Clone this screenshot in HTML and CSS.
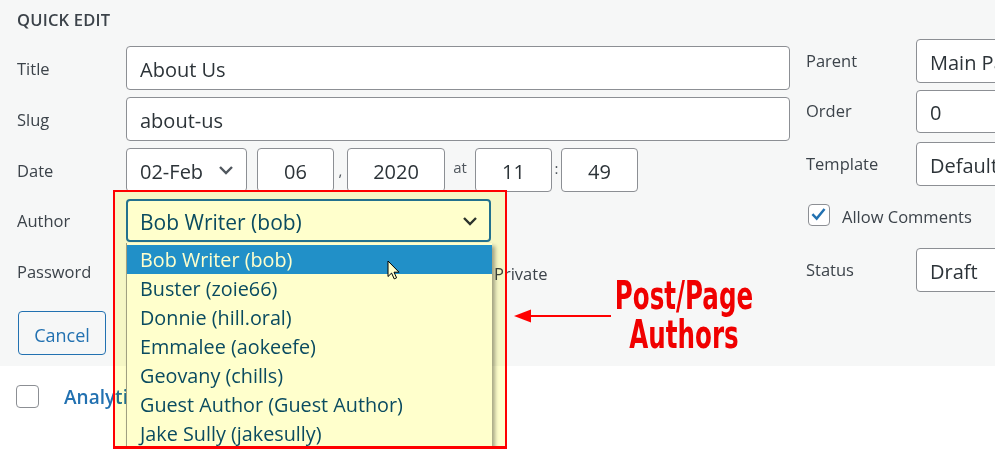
FILE: index.html
```html
<!DOCTYPE html>
<html lang="en">
<head>
<meta charset="utf-8">
<title>Quick Edit</title>
<link rel="stylesheet" href="styles.css">
</head>
<body>
<div class="page">
  <section class="panel">
    <h2 class="heading">QUICK EDIT</h2>
    <div class="cols">
      <div class="left">
        <div class="row">
          <span class="label">Title</span>
          <div class="input wide">About Us</div>
        </div>
        <div class="row">
          <span class="label">Slug</span>
          <div class="input wide">about-us</div>
        </div>
        <div class="row">
          <span class="label">Date</span>
          <div class="select month">02-Feb<svg class="chev" viewBox="0 0 20 20"><path d="M4 7l6 6 6-6" /></svg></div>
          <div class="input num day">06</div>
          <span class="sep comma">,</span>
          <div class="input num year">2020</div>
          <span class="sep at">at</span>
          <div class="input num hour">11</div>
          <span class="sep colon">:</span>
          <div class="input num min">49</div>
        </div>
        <div class="row author-row">
          <span class="label">Author</span>
          <div class="select author focus">Bob Writer (bob)<svg class="chev" viewBox="0 0 20 20"><path d="M4 7l6 6 6-6" /></svg></div>
        </div>
        <div class="row pass-row">
          <span class="label">Password</span>
          <div class="input pass"></div>
          <span class="or">&ndash;OR&ndash;</span>
          <span class="box small"></span>
          <span class="private">Private</span>
        </div>
        <div class="btn-row">
          <button class="btn">Cancel</button>
        </div>
      </div>
      <div class="right">
        <div class="rrow r-parent">
          <span class="rlabel">Parent</span>
          <div class="select rinput">Main Page (no parent)</div>
        </div>
        <div class="rrow r-order">
          <span class="rlabel">Order</span>
          <div class="input rinput order">0</div>
        </div>
        <div class="rrow r-template">
          <span class="rlabel">Template</span>
          <div class="select rinput">Default template</div>
        </div>
        <div class="rrow r-comments">
          <span class="box checked"><svg viewBox="0 0 20 20"><path d="M4.5 10.5l3.6 3.8 7.4-9" /></svg></span>
          <span class="clabel">Allow Comments</span>
        </div>
        <div class="rrow r-status">
          <span class="rlabel">Status</span>
          <div class="select rinput">Draft</div>
        </div>
      </div>
    </div>
  </section>
  <div class="list-row">
    <span class="box plain"></span>
    <span class="post-title">Analytics</span>
  </div>

  <ul class="dropdown">
    <li class="opt active">Bob Writer (bob)</li>
    <li class="opt">Buster (zoie66)</li>
    <li class="opt">Donnie (hill.oral)</li>
    <li class="opt">Emmalee (aokeefe)</li>
    <li class="opt">Geovany (chills)</li>
    <li class="opt">Guest Author (Guest Author)</li>
    <li class="opt">Jake Sully (jakesully)</li>
    <li class="opt">Jamie (jamie)</li>
  </ul>
  <svg class="cursor" viewBox="0 0 14 20"><path d="M1 1v15.5l3.6-3.4 2.6 5.8 2.4-1.1-2.6-5.6h5z" /></svg>
  <div class="highlight"></div>
  <div class="frame"></div>

  <svg class="arrow" viewBox="0 0 100 16"><path class="shaft" d="M14 8H98" /><path class="head" d="M1 8l17-6.5v13z" /></svg>
  <div class="note"><span class="note-line">Post/Page</span><span class="note-line">Authors</span></div>
</div>
</body>
</html>
```
FILE: styles.css
```css
* { box-sizing: border-box; }
html, body { margin: 0; padding: 0; }
body {
  width: 995px;
  height: 449px;
  overflow: hidden;
  background: #fff;
  font-family: "Open Sans", "Noto Sans", sans-serif;
  color: #3c434a;
}
.page { position: relative; width: 995px; height: 449px; overflow: hidden; }

.panel {
  background: #f6f7f7;
  height: 366px;
  padding: 10px 0 0 17px;
}
.heading {
  margin: 0;
  font-size: 16.5px;
  line-height: 20px;
  font-weight: 600;
  color: #3c434a;
  letter-spacing: 0.2px;
}
.cols { display: flex; }
.left { width: 773px; padding-top: 16px; }
.right { margin-left: 16px; padding-top: 9px; flex: 1; }

.row { display: flex; align-items: center; height: 44px; margin-bottom: 7px; }
.label { width: 109px; font-size: 16.5px; color: #3c434a; }

.input, .select {
  height: 44px;
  border: 1px solid #8c8f94;
  border-radius: 4px;
  background: #fff;
  font-size: 20px;
  color: #2c3338;
  display: flex;
  align-items: center;
  padding: 0 13px;
  padding-top: 2px;
  white-space: nowrap;
  overflow: hidden;
}
.wide { width: 664px; }
.select { position: relative; padding-right: 40px; }
.chev {
  position: absolute;
  right: 10px;
  top: 50%;
  width: 20px;
  height: 20px;
  margin-top: -10px;
  fill: none;
  stroke: #50575e;
  stroke-width: 2.4;
}
.month { width: 121px; }
.num { justify-content: center; padding: 2px 0 0; }
.day { width: 77px; margin-left: 10px; }
.year { width: 98px; }
.hour { width: 77px; }
.min { width: 77px; }
.sep { font-size: 15px; color: #50575e; }
.comma { width: 13px; text-align: center; align-self: flex-end; padding-bottom: 12px; }
.at { width: 30px; text-align: center; margin-top: -6px; }
.colon { width: 9px; text-align: center; margin-top: -4px; }

.author-row { height: 43px; }
.author { width: 365px; height: 43px; border: 2px solid #2271b1; color: #0a4b78; background: #fff; padding-left: 12px; font-size: 21px; }
.author .chev { stroke: #2c3338; right: 9px; }

.pass-row { margin-bottom: 18px; }
.pass { width: 290px; }
.or { font-size: 15px; margin-left: 20px; width: 30px; }
.box {
  display: inline-block;
  width: 22px;
  height: 22px;
  border: 1.5px solid #8c8f94;
  border-radius: 4px;
  background: #fff;
}
.private { font-size: 16.5px; margin-left: 6px; color: #3c434a; margin-top: 4px; }

.btn-row { display: flex; }
.btn {
  margin-left: 1px;
  width: 88px;
  height: 44px;
  border: 1.5px solid #2271b1;
  border-radius: 4px;
  background: #f6f7f7;
  color: #2271b1;
  font-family: inherit;
  font-size: 18px;
  padding: 4px 0 0;
}

.rrow { display: flex; align-items: center; height: 44px; }
.rlabel { width: 110px; font-size: 16.5px; color: #3c434a; margin-top: -2px; }
.rinput { width: 220px; flex-shrink: 0; }
.r-parent { margin-bottom: 7px; }
.r-order { height: 43px; margin-bottom: 9px; }
.order { height: 43px; }
.r-template { margin-bottom: 7px; }
.r-comments { height: 44px; margin-bottom: 11px; padding-left: 2px; }
.box.checked { position: relative; }
.box.checked svg {
  position: absolute; left: 0; top: 0; width: 19px; height: 19px;
  fill: none; stroke: #2271b1; stroke-width: 2.6; stroke-linecap: square;
}
.clabel { font-size: 16.5px; margin-left: 12px; color: #3c434a; margin-top: 2px; }

.list-row { display: flex; align-items: center; padding: 16px 0 0 16px; }
.box.plain { width: 23px; height: 23px; }
.post-title { margin-left: 25px; font-size: 19px; font-weight: 600; color: #2271b1; margin-top: 2px; }

.dropdown {
  position: absolute;
  left: 126px;
  top: 243px;
  width: 366px;
  margin: 0;
  padding: 2px 0 0;
  list-style: none;
  background: #fff;
  border-left: 1px solid #a0a0a0;
  box-shadow: 3px 3px 4px rgba(0, 0, 0, 0.35);
  height: 230px;
}
.opt {
  height: 29px;
  line-height: 30px;
  padding-left: 13px;
  font-size: 19.8px;
  color: #0a4b78;
  white-space: nowrap;
}
.opt.active { background: #2190fa; color: #fff; }

.cursor {
  position: absolute;
  left: 387px;
  top: 260px;
  width: 14px;
  height: 20px;
  fill: #fff;
  stroke: #000;
  stroke-width: 1;
  stroke-linejoin: round;
}

.highlight {
  position: absolute;
  left: 113px;
  top: 190px;
  width: 394px;
  height: 259px;
  background: #ffffcc;
  mix-blend-mode: multiply;
  pointer-events: none;
}
.frame {
  position: absolute;
  left: 113px;
  top: 190px;
  width: 394px;
  height: 259px;
  border: 2px solid #ff0000;
  border-bottom-width: 3px;
  pointer-events: none;
}

.arrow {
  position: absolute;
  left: 513px;
  top: 308px;
  width: 100px;
  height: 16px;
}
.arrow .shaft { stroke: #ff0000; stroke-width: 2; }
.arrow .head { fill: #ff0000; }

.note {
  position: absolute;
  left: 584px;
  top: 278px;
  width: 200px;
  display: flex;
  flex-direction: column;
  align-items: center;
  font-family: "Liberation Sans Narrow", "DejaVu Sans Condensed", "Liberation Sans", sans-serif;
  font-weight: 700;
  font-size: 39px;
  line-height: 35px;
  color: #f00000;
  transform: scaleX(0.7);
}
.note-line { display: block; height: 39px; }
```
